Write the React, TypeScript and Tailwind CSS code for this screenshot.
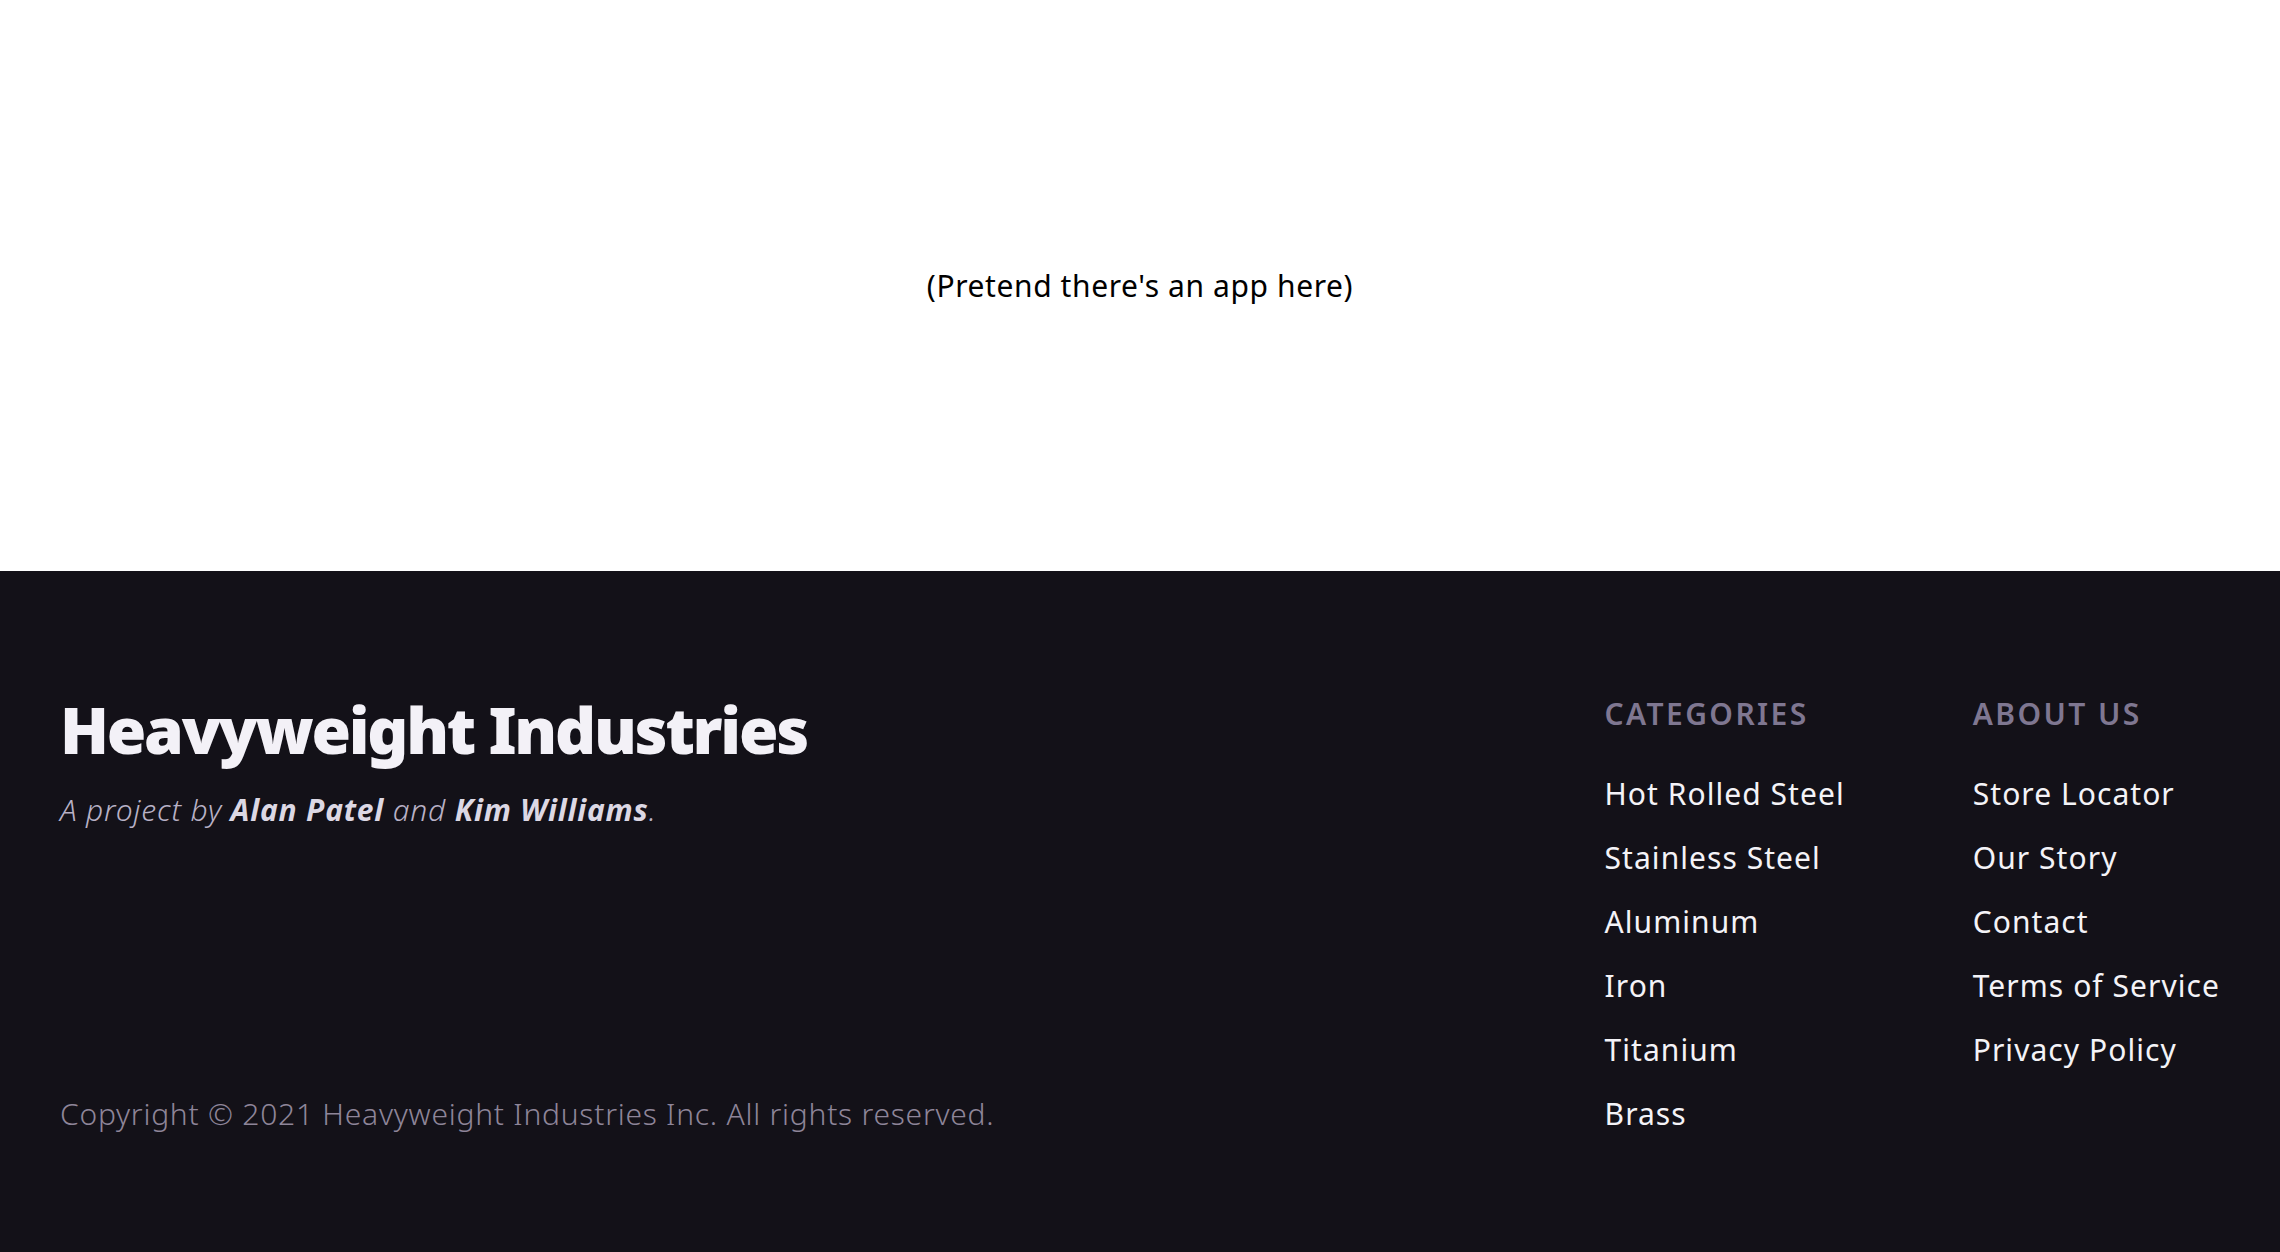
const categories = ['Hot Rolled Steel', 'Stainless Steel', 'Aluminum', 'Iron', 'Titanium', 'Brass']
const about = ['Store Locator', 'Our Story', 'Contact', 'Terms of Service', 'Privacy Policy']

function LinkColumn({ title, links }: { title: string; links: string[] }) {
  return (
    <div className="flex flex-col">
      <h3 className="text-[30px] leading-[40px] font-semibold uppercase tracking-[0.08em] text-[#7f7791]">{title}</h3>
      <ul className="mt-[28px] flex flex-col">
        {links.map((l) => (
          <li key={l}>
            <a href="#" className="block text-[30px] leading-[64px] tracking-[0.035em] text-[#f4f3f7]">
              {l}
            </a>
          </li>
        ))}
      </ul>
    </div>
  )
}

export default function App() {
  return (
    <div className="flex flex-col min-h-screen font-['Noto_Sans',sans-serif]">
      <main className="h-[571px] flex items-center justify-center bg-white">
        <p className="text-[30px] tracking-[0.02em] text-black">(Pretend there's an app here)</p>
      </main>
      <footer className="h-[681px] bg-[#131118] px-[60px] pt-[123px] pb-[116px] flex justify-between">
        <div className="flex flex-col justify-between">
          <div>
            <h2 className="text-[64px] leading-[72px] font-black tracking-[-0.035em] text-[#f3f1f7]">
              Heavyweight Industries
            </h2>
            <p className="mt-[21px] text-[30px] italic font-light tracking-[0.027em] text-[#b9b1c6]">
              A project by <span className="font-bold text-[#dcd8e4]">Alan Patel</span> and{' '}
              <span className="font-bold text-[#dcd8e4]">Kim Williams</span>.
            </p>
          </div>
          <p className="text-[30px] font-light tracking-[0.025em] text-[#8e8599]">
            Copyright © 2021 Heavyweight Industries Inc. All rights reserved.
          </p>
        </div>
        <div className="flex gap-[128px]">
          <LinkColumn title="Categories" links={categories} />
          <LinkColumn title="About Us" links={about} />
        </div>
      </footer>
    </div>
  )
}
